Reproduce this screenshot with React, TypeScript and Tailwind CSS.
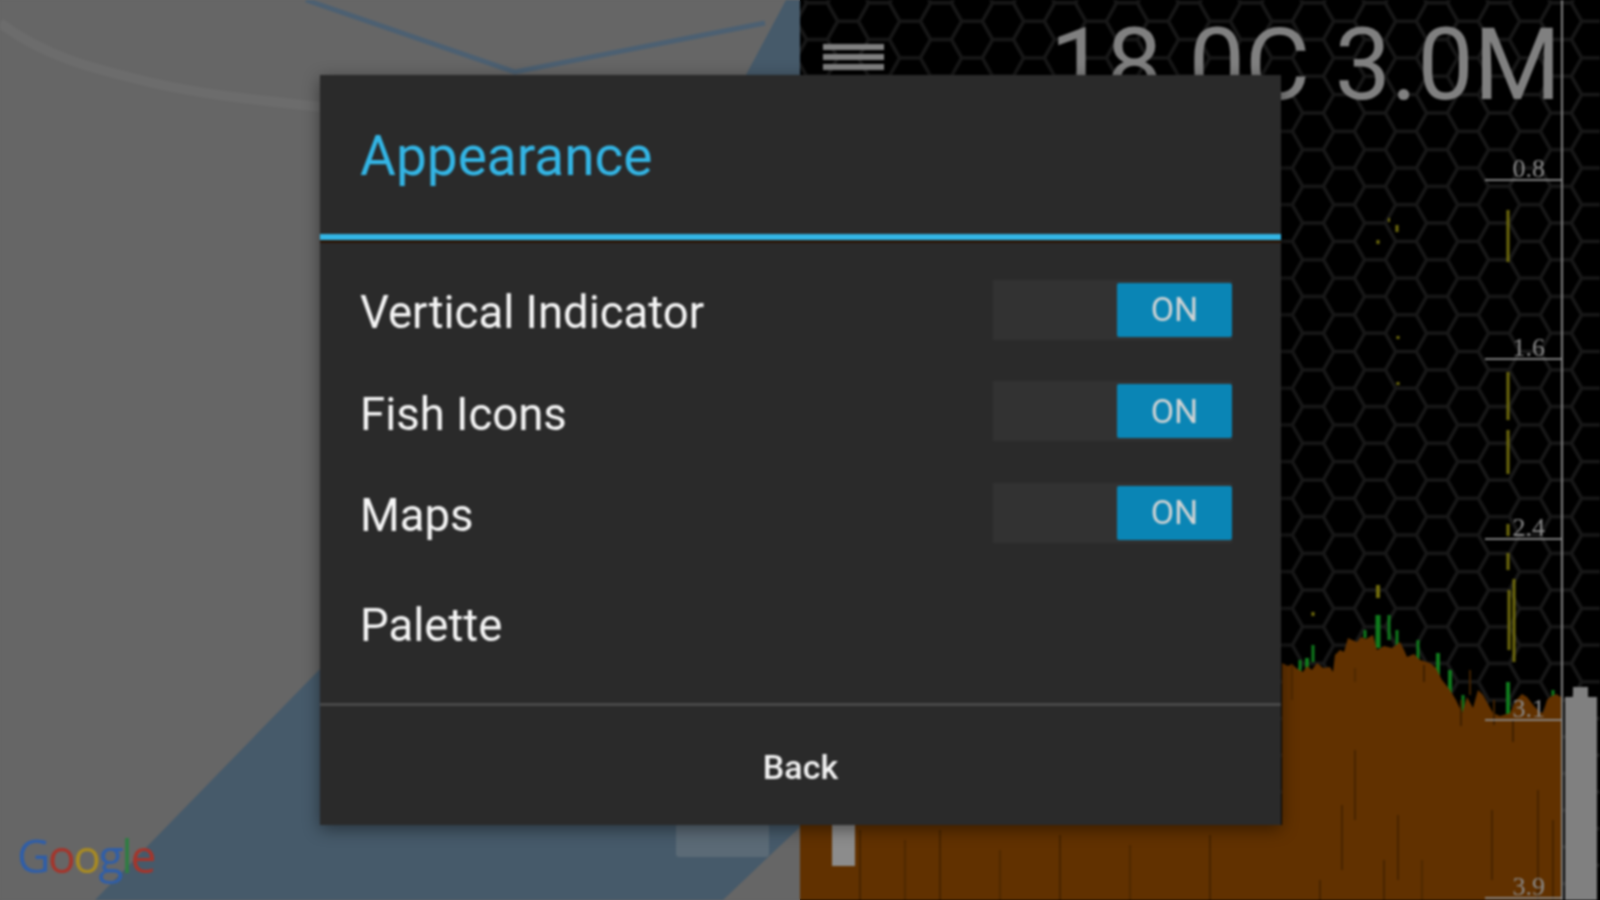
const rows = ["Vertical Indicator", "Fish Icons", "Maps"];

const ticks = [
  { y: 181, label: "0.8" },
  { y: 360, label: "1.6" },
  { y: 540, label: "2.4" },
  { y: 721, label: "3.1" },
  { y: 899, label: "3.9" },
];

const terrain =
  "M800 900 L800 825 L1282 825 L1282 663 L1288 666 L1292 664 L1296 668 L1303 672 L1307 666 L1312 670 L1317 663 L1323 668 L1330 667 L1333 672 L1335 655 L1340 650 L1344 652 L1348 638 L1352 640 L1357 642 L1361 637 L1366 639 L1373 635 L1377 650 L1384 646 L1392 648 L1400 642 L1404 650 L1407 657 L1414 654 L1420 660 L1430 663 L1436 668 L1442 680 L1450 690 L1456 700 L1462 713 L1467 697 L1473 708 L1478 690 L1483 695 L1488 704 L1493 713 L1500 716 L1510 713 L1516 700 L1522 694 L1527 697 L1534 706 L1540 712 L1543 713 L1547 700 L1550 697 L1556 694 L1561 697 L1561 900 Z";

const green = [
  [1300, 660, 672, 3],
  [1307, 658, 672, 4],
  [1313, 645, 662, 3],
  [1365, 630, 638, 3],
  [1378, 615, 648, 5],
  [1389, 615, 640, 3],
  [1397, 630, 645, 3],
  [1418, 640, 665, 3],
  [1438, 653, 676, 4],
  [1450, 670, 695, 4],
  [1463, 695, 712, 3],
  [1508, 682, 715, 4],
  [1553, 690, 705, 3],
];

const olive = [
  [1378, 585, 598, 4],
  [1313, 612, 616, 3],
  [1508, 210, 262, 3],
  [1397, 225, 232, 3],
  [1389, 218, 222, 2],
  [1378, 240, 244, 3],
  [1508, 372, 420, 3],
  [1508, 430, 474, 3],
  [1398, 336, 339, 3],
  [1398, 382, 385, 3],
  [1508, 524, 536, 3],
  [1508, 553, 570, 3],
  [1514, 579, 662, 3],
  [1509, 590, 650, 3],
];

const streaks = [
  [1292, 665, 700, 1],
  [1355, 668, 682, 1],
  [1355, 750, 820, 1.5],
  [1342, 805, 870, 1.5],
  [1398, 815, 880, 1.5],
  [1384, 860, 900, 1.5],
  [1492, 810, 880, 1.5],
  [1538, 790, 900, 1.5],
  [1553, 820, 900, 1.5],
  [1320, 880, 900, 1.5],
  [1422, 860, 900, 1],
  [1424, 665, 682, 2],
  [1470, 670, 695, 2],
  [1461, 700, 726, 2],
  [1513, 720, 742, 2],
  [1494, 700, 725, 2],
  [860, 830, 900, 1.5],
  [905, 840, 900, 1],
  [940, 830, 900, 1.5],
  [1000, 850, 900, 1],
  [1060, 835, 900, 1.5],
  [1130, 845, 900, 1],
  [1210, 835, 900, 1.5],
];

function MapPanel() {
  return (
    <div className="relative h-full w-[800px] bg-[#666666]">
      <svg className="absolute inset-0 h-full w-full" viewBox="0 0 800 900">
        <polygon points="95,900 321,668 747,73 786,0 800,0 800,827 723,900" fill="#465a6a" />
        <path d="M0 23 C 50 60 100 70 153 83 C 210 96 260 100 330 108" stroke="#6c6c6c" strokeWidth="10" fill="none" />
        <path d="M306 0 L515 72 L765 23" stroke="#4c6072" strokeWidth="5" fill="none" />
      </svg>
      <div className="absolute left-[676px] top-[815px] h-[42px] w-[93px] rounded-[3px] bg-[#5b6a76]" />
      <div
        className="absolute left-[17px] top-[825px] text-[46px] leading-[60px] tracking-[-2.4px]"
        style={{ fontFamily: '"Open Sans", sans-serif' }}
      >
        <span className="text-[#2f5ea8]">G</span>
        <span className="text-[#a5352b]">o</span>
        <span className="text-[#a88a22]">o</span>
        <span className="text-[#2f5ea8]">g</span>
        <span className="text-[#2f7d42]">l</span>
        <span className="text-[#a5352b]">e</span>
      </div>
    </div>
  );
}

function SonarPanel() {
  return (
    <div className="relative h-full w-[800px] bg-black">
      <svg className="absolute inset-0 h-full w-full" viewBox="800 0 800 900">
        <defs>
          <pattern
            id="hex"
            width="62"
            height="36.7"
            patternUnits="userSpaceOnUse"
            patternTransform="translate(1282 149.65)"
          >
            <path
              d="M10.33 18.35 L20.67 0 L41.33 0 L51.67 18.35 L41.33 36.7 L20.67 36.7 Z M0 18.35 L10.33 18.35 M51.67 18.35 L62 18.35"
              fill="none"
              stroke="#181818"
              strokeWidth="3.5"
            />
          </pattern>
        </defs>
        <rect x="800" y="0" width="800" height="900" fill="url(#hex)" />
        {green.map(([x, a, b, w], i) => (
          <line key={i} x1={x} x2={x} y1={a} y2={b} stroke="#0f7a1c" strokeWidth={w} />
        ))}
        <path d={terrain} fill="#613100" />
        {olive.map(([x, a, b, w], i) => (
          <line key={i} x1={x} x2={x} y1={a} y2={b} stroke="#6f6a0c" strokeWidth={w} />
        ))}
        {streaks.map(([x, a, b, w], i) => (
          <line key={i} x1={x} x2={x} y1={a} y2={b} stroke="#3f2000" strokeWidth={w} />
        ))}
        <line x1="1562" x2="1562" y1="0" y2="900" stroke="#808080" strokeWidth="2" />
        <path d="M1565 900 L1565 697 L1573 697 L1573 687 L1588 687 L1588 697 L1597 697 L1597 900 Z" fill="#808080" />
      </svg>
      <div className="absolute left-[32px] top-[820px] h-[46px] w-[23px] bg-[#8c8c8c]" />
      <div className="absolute left-[23px] top-[44px] flex w-[61px] flex-col gap-[4px]">
        <div className="h-[6px] bg-[#808080]" />
        <div className="h-[6px] bg-[#808080]" />
        <div className="h-[6px] bg-[#808080]" />
      </div>
      <div className="absolute left-[250px] top-[6px] whitespace-nowrap text-[100px] leading-[118px] text-[#808080]">
        18.0C 3.0M
      </div>
      {ticks.map((t) => (
        <div
          key={t.label}
          className="absolute left-[685px] flex h-[30px] w-[76px] items-end justify-end border-b-2 border-[#8a8a8a]/90 pr-[16px] text-[26px] leading-[20px] text-[#8a8a8a]"
          style={{ top: t.y - 30, fontFamily: '"Liberation Serif", serif' }}
        >
          {t.label}
        </div>
      ))}
    </div>
  );
}

function Toggle() {
  return (
    <div className="flex h-[60px] w-[239px] items-center justify-end bg-[#323232]">
      <div className="flex h-[54px] w-[115px] items-center justify-center rounded-[2px] bg-[#0a85b5] text-[34px] text-[#cfd3d4]">
        ON
      </div>
    </div>
  );
}

export default function App() {
  return (
    <div className="h-[900px] w-[1600px] overflow-hidden bg-[linear-gradient(90deg,#666666_50%,#000000_50%)]">
      <div
        className="relative flex h-[900px] w-[1600px] overflow-hidden blur-[0.8px]"
        style={{ fontFamily: "Roboto, sans-serif" }}
      >
        <MapPanel />
        <SonarPanel />
        <div className="absolute left-[320px] top-[75px] flex h-[750px] w-[961px] flex-col bg-[#2a2a2a] shadow-[0_4px_16px_rgba(0,0,0,0.45)]">
          <div className="flex h-[159px] items-center pl-[40px] pt-[4px] text-[55px] text-[#33b5e5]">Appearance</div>
          <div className="h-[6px] bg-[#33b5e5]" />
          <div className="h-[3px] bg-[#2a1608]" />
          <div className="flex flex-1 flex-col">
            <div className="h-[16px]" />
            {rows.map((r) => (
              <div key={r} className="flex h-[101.5px] items-center justify-between pl-[40px] pr-[49px]">
                <span className="pt-[7px] text-[45.5px] text-[#f5f5f5]">{r}</span>
                <Toggle />
              </div>
            ))}
            <div className="flex h-[120px] items-center pl-[40px] pt-[6px] text-[45.5px] text-[#f5f5f5]">Palette</div>
          </div>
          <div className="flex h-[122px] items-center justify-center border-t-[3px] border-[#484848] pt-[4px] text-[34px] font-medium text-[#f2f2f2]">
            Back
          </div>
        </div>
      </div>
    </div>
  );
}
